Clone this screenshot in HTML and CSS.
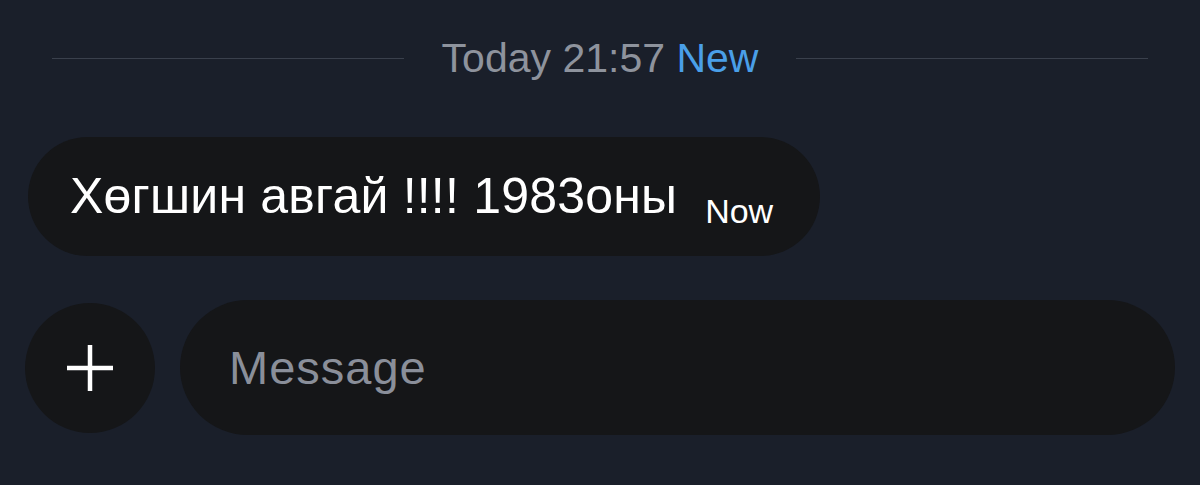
FILE: index.html
```html
<!DOCTYPE html>
<html lang="mn">
<head>
  <meta charset="UTF-8">
  <title>Chat</title>
  <link rel="stylesheet" href="styles.css">
</head>
<body>
  <div class="chat">
    <div class="divider">
      <span class="line"></span>
      <span class="stamp">Today 21:57 <b class="new">New</b></span>
      <span class="line"></span>
    </div>

    <div class="bubble">
      <span class="text">Хөгшин авгай !!!! 1983оны</span>
      <span class="time">Now</span>
    </div>

    <div class="composer">
      <button class="plus">
        <svg width="50" height="50" viewBox="0 0 50 50">
          <path d="M25 2 V48 M2 25 H48" stroke="#fff" stroke-width="4.5"/>
        </svg>
      </button>
      <div class="input">Message</div>
    </div>
  </div>
</body>
</html>
```

FILE: styles.css
```css
body {
  margin: 0;
  height: 100vh;
  background: #1a1f2a;
  font-family: "Liberation Sans", Arial, sans-serif;
  overflow: hidden;
}

.chat {
  display: flex;
  flex-direction: column;
  padding: 30px 25px 0 25px;
}

.divider {
  display: flex;
  align-items: center;
  gap: 38px;
  padding: 0 27px;
  height: 56px;
}

.line {
  flex: 1;
  height: 1px;
  background: #3a404c;
}

.stamp {
  color: #8e939d;
  font-size: 41px;
  white-space: nowrap;
}

.new {
  color: #4a9fe8;
  font-weight: normal;
}

.bubble {
  align-self: flex-start;
  display: flex;
  align-items: baseline;
  margin: 51px 0 0 3px;
  height: 119px;
  box-sizing: border-box;
  padding: 30px 47px 0 42px;
  background: #151618;
  border-radius: 60px;
  color: #fff;
}

.text {
  font-size: 50px;
  letter-spacing: 0.2px;
}

.time {
  font-size: 34px;
  margin-left: 28px;
  position: relative;
  top: 10px;
}

.composer {
  display: flex;
  align-items: center;
  gap: 25px;
  margin-top: 44px;
}

.plus {
  width: 130px;
  height: 130px;
  flex-shrink: 0;
  border: none;
  border-radius: 50%;
  background: #151618;
  display: flex;
  align-items: center;
  justify-content: center;
  padding: 0;
}

.input {
  flex: 1;
  height: 135px;
  border-radius: 68px;
  background: #151618;
  color: #8a8f9a;
  font-size: 47px;
  letter-spacing: 1px;
  display: flex;
  align-items: center;
  padding-left: 49px;
}
```
